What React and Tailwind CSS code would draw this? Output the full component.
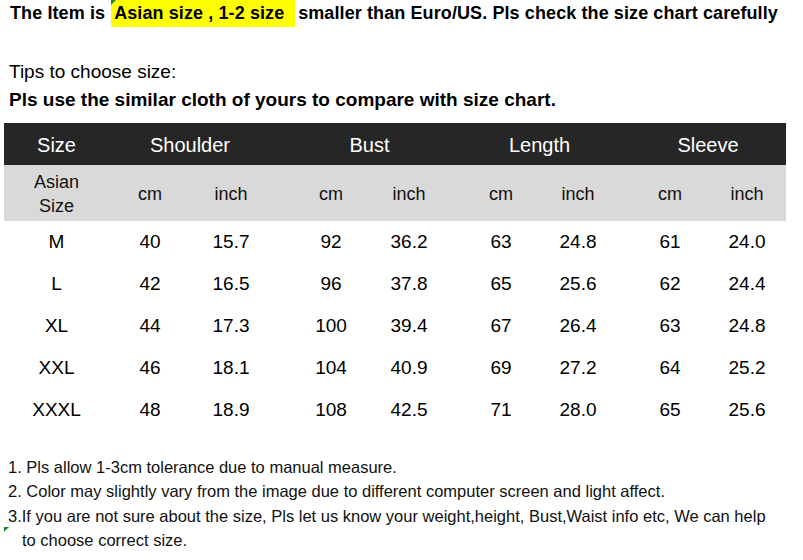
const rows = [
  ["M", "40", "15.7", "92", "36.2", "63", "24.8", "61", "24.0"],
  ["L", "42", "16.5", "96", "37.8", "65", "25.6", "62", "24.4"],
  ["XL", "44", "17.3", "100", "39.4", "67", "26.4", "63", "24.8"],
  ["XXL", "46", "18.1", "104", "40.9", "69", "27.2", "64", "25.2"],
  ["XXXL", "48", "18.9", "108", "42.5", "71", "28.0", "65", "25.6"],
];

// nudges so the numbers sit where the chart has them
const shift = ["", "", "pr-[10px]", "pl-[11px]", "pr-[7px]", "pl-[7px]", "pr-[8px]", "pl-[8px]", ""];

const grid = "grid grid-cols-[105px_82px_90px_89px_85px_85px_84px_84px_78px]";

function CornerMark({ className }) {
  return (
    <svg width="5" height="5" viewBox="0 0 5 5" className={className}>
      <polygon points="0,0 5,0 0,5" fill="#1e8a2e" />
    </svg>
  );
}

export default function App() {
  return (
    <div className="w-[803px] h-[560px] overflow-hidden bg-white text-black font-['Liberation_Sans',Arial,sans-serif]">
      <div className="flex items-center h-[27px] pl-[10px] text-[18px] font-bold whitespace-nowrap tracking-[0.1px]">
        <span>The Item is</span>
        <span className="relative ml-[6px] h-[27px] w-[184px] bg-[#ffff00] flex items-center pl-[3px]">
          <CornerMark className="absolute left-0 top-0" />
          Asian size , 1-2 size
        </span>
        <span className="ml-[3px]">smaller than Euro/US. Pls check the size chart carefully</span>
      </div>

      <div className="mt-[34px] pl-[9px] text-[19px] leading-[22px]">Tips to choose size:</div>
      <div className="mt-[6px] pl-[9px] text-[19px] leading-[22px] font-bold">
        Pls use the similar cloth of yours to compare with size chart.
      </div>

      <div className="mt-[12px] ml-[4px] w-[782px]">
        <div className={`${grid} h-[42px] bg-[#262626] text-white text-[20px] items-center pt-[2px]`}>
          <div className="text-center">Size</div>
          <div className="col-span-2 text-center pr-[10px]">Shoulder</div>
          <div className="col-span-2 text-center pl-[3px]">Bust</div>
          <div className="col-span-2 text-center">Length</div>
          <div className="col-span-2 text-center pl-[6px]">Sleeve</div>
        </div>
        <div className={`${grid} h-[56px] bg-[#d9d9d9] text-[#111] text-[18px] items-center pt-[2px]`}>
          <div className="text-center leading-[24px]">
            Asian
            <br />
            Size
          </div>
          {["cm", "inch", "cm", "inch", "cm", "inch", "cm", "inch"].map((u, i) => (
            <div key={i} className={`text-center ${shift[i + 1]}`}>
              {u}
            </div>
          ))}
        </div>
        {rows.map((r) => (
          <div key={r[0]} className={`${grid} h-[42px] text-[19px] items-center`}>
            {r.map((v, i) => (
              <div key={i} className={`text-center ${shift[i]}`}>
                {v}
              </div>
            ))}
          </div>
        ))}
      </div>

      <div className="relative mt-[24px] pl-[8px] text-[16.5px] leading-[24.3px] text-[#111]">
        <div>1. Pls allow 1-3cm tolerance due to manual measure.</div>
        <div>2. Color may slightly vary from the image due to different computer screen and light affect.</div>
        <div>3.If you are not sure about the size, Pls let us know your weight,height, Bust,Waist info etc, We can help</div>
        <div className="pl-[14px]">to choose correct size.</div>
        <CornerMark className="absolute left-[4px] top-[72px]" />
      </div>
    </div>
  );
}
